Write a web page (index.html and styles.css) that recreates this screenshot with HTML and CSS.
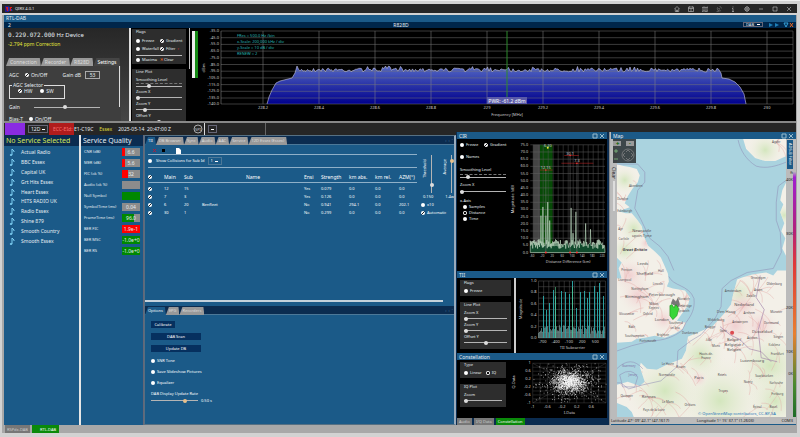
FILE: index.html
```
<!DOCTYPE html>
<html lang="en">

<head>
    <meta charset="UTF-8">
    <meta name="viewport" content="width=device-width, initial-scale=1.0">
    <title>QIRX 4.0.1</title>
    <link rel="stylesheet" href="styles.css">
</head>

<body>
    <header class="titlebar">
        <svg class="logo" viewBox="0 0 8 6">
            <rect width="4" height="6" fill="#1c1c8c" />
            <path d="M1 1h2v4h-1zM5 1h2v1h-1v3h-1z" fill="#e01818" />
            <path d="M4 1v4M6 3l1 2" stroke="#3b3bd8" />
        </svg>
        <h1>QIRX 4.0.1</h1>
        <nav class="tools">
            <button aria-label="Home"><svg viewBox="0 0 12 12"><path d="M1 6l5-5 5 5M2.500 5v6h7V5M5 11V8h2v3" /></svg></button>
            <button aria-label="Schedule"><svg viewBox="0 0 12 12"><path d="M1 2h10v9H1zM1 5h10M6 5v6M3 1v2M9 1v2" /></svg></button>
            <button aria-label="Map"><svg viewBox="0 0 12 12"><path d="M0 3l4-1 4 1 4-1v8l-4 1-4-1-4 1zM4 2v8M8 3v8" /></svg></button>
            <button aria-label="Antenna" class="dim"><svg viewBox="0 0 12 12"><path d="M3 3a5 5 0 0 0 6 7zM6 6l2-2M7 1a4 4 0 0 1 4 4M1 11h4l-1-3" /></svg></button>
            <button aria-label="Info"><svg viewBox="0 0 12 12"><path d="M6 1v2M4 5h2v6M4 11h4" /></svg></button>
            <button aria-label="Setup"><svg viewBox="0 0 12 12"><circle cx="6" cy="6" r="4" /><circle cx="6" cy="6" r="2" /><path d="M6 0v2M6 10v2M0 6h2M10 6h2M2 2l1 1M9 9l1 1M10 2L9 3M3 9l-1 1" /></svg></button>
            <button aria-label="Minimize"><svg viewBox="0 0 12 12"><path d="M2 6h8" /></svg></button>
            <button aria-label="Maximize"><svg viewBox="0 0 12 12"><path d="M2 2h8v8H2z" /></svg></button>
            <button aria-label="Close"><svg viewBox="0 0 12 12"><path d="M2 2l8 8M10 2l-8 8" /></svg></button>
        </nav>
    </header>

    <div class="window">
        <div class="head">RTL-DAB</div>
        <div class="subhead">
            <span>2</span>
            <span class="tuner">R828D</span>
            <span class="subtools">
                <select class="drop" aria-label="Mode"><option>DAB</option></select>
                <svg viewBox="0 0 26 6">
                    <path d="M1 1l4 2-4 2zM7 1l4 2-4 2z" fill="#1d7fb8" />
                    <path d="M16 1h4l-2 4z" fill="none" stroke="#35a0d8" />
                    <path d="M22 1l3 4M25 1l-3 4" stroke="#f06a20" />
                </svg>
            </span>
        </div>

        <!-- receiver -->
        <section class="receiver">
            <div class="device">
                <p class="freq"><span>0.229.072.000</span> Hz Device</p>
                <p class="ppm">-2.794 ppm Correction</p>
                <div class="tabs big">
                    <button>Connection</button><button>Recorder</button><button>R828D</button><button class="on">Settings</button>
                </div>
                <div class="settings">
                    <div class="row">
                        <span>AGC</span>
                        <label><input type="checkbox" checked> On/Off</label>
                        <label class="gaindb">Gain dB <input type="text" value="53"></label>
                    </div>
                    <fieldset class="agc">
                        <legend>AGC Selector</legend>
                        <label><input type="radio" name="agc" class="tick" checked> HW</label>
                        <label><input type="radio" name="agc"> SW</label>
                    </fieldset>
                    <label class="row gain">Gain <input type="range" value="47"></label>
                    <div class="row"><span>Bias-T</span><label><input type="checkbox"> On/Off</label></div>
                    <i class="scroll"></i>
                </div>
            </div>
            <div class="flags">
                <fieldset class="box">
                    <legend>Flags</legend>
                    <div class="pairs">
                        <label><input type="checkbox"> Freeze</label>
                        <label><input type="checkbox" checked> Gradient</label>
                        <label><input type="checkbox"> Waterfall</label>
                        <label><input type="checkbox" checked> Filter <b>▫</b></label>
                    </div>
                    <div class="pairs ruled">
                        <label><input type="checkbox"> Maxima</label>
                        <button class="clear"><b>✕</b> Clear</button>
                    </div>
                </fieldset>
                <fieldset class="box lineplot">
                    <legend>Line Plot</legend>
                    <label>Smoothing Level <input type="range" class="ticks" value="27"></label>
                    <label>Zoom X <input type="range" value="0"></label>
                    <label>Zoom Y <input type="range" value="16"></label>
                    <label>Offset Y <input type="range" value="50"></label>
                </fieldset>
            </div>
            <i class="rail"></i>
            <div class="level"></div>
            <svg class="spectrum" id="spectrum" viewBox="0 0 596 92"></svg>
        </section>

        <div class="status">
            <i class="purple"></i>
            <select class="drop" aria-label="Channel"><option>12D</option></select>
            <span class="ecc">ECC-EId:</span>
            <span class="eid">E1-C19C</span>
            <span class="ens">Essex</span>
            <span class="time">2025-05-14&nbsp; 20:47:00 Z</span>
            <svg class="spi" viewBox="0 0 10 10"><circle cx="5" cy="5" r="4" /><text x="5" y="7">SPI</text></svg>
            <i class="split"></i>
            <select class="drop mini" aria-label="Audio device"><option></option></select>
            <i class="mark"></i>
        </div>

        <main class="main">
            <section class="services">
                <h2>No Service Selected</h2>
                <ul id="services"></ul>
            </section>

            <section class="quality">
                <h2>Service Quality</h2>
                <dl>
                    <div><dt>CNR (dB)</dt><dd class="c1">6.6</dd></div>
                    <div><dt>MER (dB)</dt><dd class="c1">5.6</dd></div>
                    <div><dt>FIC (ok %)</dt><dd class="c2">32</dd></div>
                    <div><dt>Audio (ok %)</dt><dd></dd></div>
                    <div><dt>Null Symbol</dt><dd class="green"></dd></div>
                    <div><dt>SymbolTime (ms)</dt><dd>0.04</dd></div>
                    <div><dt>FrameTime (ms)</dt><dd class="c3">96.0</dd></div>
                    <div><dt>BER FIC</dt><dd class="red">1.9e-1</dd></div>
                    <div><dt>BER MSC</dt><dd class="green">-1.0e+0</dd></div>
                    <div><dt>BER RS</dt><dd class="green">-1.0e+0</dd></div>
                </dl>
            </section>

            <section class="center">
                <div class="strip">
                    <div class="tabs"><button class="on">TII</button><button>DB Browser</button><button>Sync</button><button>Audio</button><button>AAC</button><button>Service</button><button>12D Essex (Essex)</button></div>
                    <span class="arrows">‹ &nbsp;› &nbsp;˅</span>
                </div>
                <div class="tii">
                    <div class="tiimain">
                        <div class="bar">
                            <svg viewBox="0 0 34 7">
                                <path d="M3 2l3 3M6 2l-3 3" stroke="#b81c38" />
                                <rect x="12" y="2" width="3" height="3" fill="#000" />
                                <path d="M26 1h3l2 2v4h-5z" fill="#fff" />
                            </svg>
                        </div>
                        <div class="bar collide">
                            <label><input type="checkbox"> Show Collisions for Sub Id</label>
                            <select class="drop" aria-label="Sub Id"><option>1</option></select>
                        </div>
                        <table>
                            <thead>
                                <tr><th><input type="checkbox" aria-label="All" checked></th><th>Main</th><th>Sub</th><th>Name</th><th>Ensi</th><th>Strength</th><th>km abs.</th><th>km rel.</th><th>AZM(°)</th></tr>
                            </thead>
                            <tbody>
                                <tr><td><input type="checkbox" aria-label="12-15" checked></td><td>12</td><td>15</td><td></td><td>Yes</td><td>0.079</td><td>0.0</td><td>0.0</td><td>0.0</td></tr>
                                <tr><td><input type="checkbox" aria-label="7-3" checked></td><td>7</td><td>3</td><td></td><td>Yes</td><td>0.126</td><td>0.0</td><td>0.0</td><td>0.0</td></tr>
                                <tr><td><input type="checkbox" aria-label="6-20" checked></td><td>6</td><td>20</td><td>Benfleet</td><td>No</td><td>0.941</td><td>294.1</td><td>0.0</td><td>202.1</td></tr>
                                <tr><td><input type="checkbox" aria-label="30-1" checked></td><td>30</td><td>1</td><td></td><td>No</td><td>0.299</td><td>0.0</td><td>0.0</td><td>0.0</td></tr>
                            </tbody>
                        </table>
                    </div>
                    <div class="tiiside">
                        <div class="verts">
                            <label><span>Threshold</span><input type="range" value="18"></label>
                            <label><span>Average</span><input type="range" class="hot" value="88"></label>
                        </div>
                        <p><span>0.150</span><span>1.4w</span></p>
                        <label><input type="checkbox"> x10</label>
                        <label><input type="checkbox" checked> Automatic</label>
                    </div>
                </div>
                <i class="hscroll"></i>
                <div class="strip">
                    <div class="tabs"><button class="on">Options</button><button>EPG</button><button>Recorders</button></div>
                    <span class="arrows">‹ &nbsp;› &nbsp;˅</span>
                </div>
                <div class="options">
                    <button class="small">Calibrate</button>
                    <button>DAB Scan</button>
                    <button>Update DB</button>
                    <label><input type="checkbox"> SNR Tone</label>
                    <label><input type="checkbox"> Save Slideshow Pictures</label>
                    <label><input type="checkbox"> Equalizer</label>
                    <div class="rate">
                        <label for="rate">DAB Display Update Rate</label>
                        <span><input type="range" id="rate" class="hot" value="75"> 0.50 s</span>
                    </div>
                </div>
            </section>

            <section class="plots">
                <h3>CIR <svg viewBox="0 0 12 6"><path d="M1 1h4v4H1zM8 1l4 4M12 1L8 5" /></svg></h3>
                <div class="plot cir">
                    <div class="ctl">
                        <div class="pairs">
                            <label><input type="checkbox"> Freeze</label>
                            <label><input type="checkbox" checked> Gradient</label>
                        </div>
                        <label><input type="checkbox"> Names</label>
                        <label class="stack smooth">Smoothing Level <input type="range" class="ticks" value="14"></label>
                        <label class="stack">Zoom X <input type="range" value="0"></label>
                        <div class="axis">
                            <span>x-Axis</span>
                            <label><input type="radio" name="axis"> Samples</label>
                            <label><input type="radio" name="axis" checked> Distance</label>
                            <label><input type="radio" name="axis"> Time</label>
                        </div>
                    </div>
                    <svg id="cir" viewBox="0 0 104 130"></svg>
                </div>
                <h3>TII <svg viewBox="0 0 12 6"><path d="M1 1h4v4H1zM8 1l4 4M12 1L8 5" /></svg></h3>
                <div class="plot tiiplot">
                    <div class="ctl wide">
                        <fieldset class="box one"><legend>Flags</legend><label><input type="checkbox"> Freeze</label></fieldset>
                        <fieldset class="box lineplot">
                            <legend>Line Plot</legend>
                            <label>Zoom X <input type="range" value="0"></label>
                            <label>Zoom Y <input type="range" value="0"></label>
                            <label>Offset Y <input type="range" value="50"></label>
                        </fieldset>
                    </div>
                    <i class="rail"></i>
                    <svg id="tii" viewBox="0 0 90 75"></svg>
                </div>
                <h3>Constellation <svg viewBox="0 0 12 6"><path d="M1 1h4v4H1zM8 1l4 4M12 1L8 5" /></svg></h3>
                <div class="plot constel">
                    <div class="ctl">
                        <fieldset class="box one">
                            <legend>Type</legend>
                            <label><input type="radio" name="type"> Linear</label>
                            <label><input type="radio" name="type" checked> IQ</label>
                        </fieldset>
                        <fieldset class="box lineplot"><legend>IQ Plot</legend><label>Zoom <input type="range" value="0"></label></fieldset>
                    </div>
                    <svg id="iq" viewBox="0 0 102 58"></svg>
                </div>
                <div class="flat"><button>Audio</button><button>I/Q Data</button><button class="on">Constellation</button></div>
            </section>

            <section class="mapwrap">
                <h3>Map <svg viewBox="0 0 12 6"><path d="M1 1h4v4H1zM8 1l4 4M12 1L8 5" /></svg></h3>
                <div class="maprow">
                    <div class="mapleft"><span>Clear</span><i></i></div>
                    <div class="map">
                        <svg id="map" viewBox="617 139 169 277" preserveAspectRatio="xMidYMid slice">
                            <defs>
                                <radialGradient id="green"><stop offset="0" stop-color="#d3e6bd" /><stop offset="1" stop-color="#f1efe4" stop-opacity="0" /></radialGradient>
                                <radialGradient id="pink"><stop offset="0" stop-color="#f1cfd0" /><stop offset="1" stop-color="#f3eee6" stop-opacity="0" /></radialGradient>
                                <clipPath id="land">
                                    <path d="M617 164L624 166 630 167 637 169 640 175 638 182 633 188 628 196 625 203 630 207 619 211 626 213 632 213 637 219 642 226 644 236 648 245 655 251 661 257 665 266 668 273 669 281 667 286 673 288 685 290 690 297 688 305 682 313 677 320 686 322 683 328 675 333 665 337 655 335 645 337 637 338 632 341 617 342V278L622 278 619 268 622 262 617 257z" />
                                    <path d="M743 139L746 149 755 158 765 161 775 161 786 156V139z" />
                                    <path d="M786 182L782 190 780 200 783 204 780 212 784 223 781 231 785 238 782 248 786 256z" />
                                    <path d="M786 270L777 270 773 275 766 272 752 274 742 277 737 279 733 294 731 304 724 313 713 325 702 330 688 336 686 350 682 358 667 364 657 369 647 368 641 362 640 366 645 381 640 385 628 381 617 384V402L627 406 632 411 634 416H786z" />
                                </clipPath>
                            </defs>
                            <rect x="617" y="139" width="169" height="277" fill="#aad3df" />
                            <g clip-path="url(#land)">
                                <rect x="617" y="139" width="169" height="277" fill="#f3f0e8" />
                                <g fill="url(#green)">
                                    <circle cx="765" cy="150" r="18" /><circle cx="625" cy="180" r="14" /><circle cx="634" cy="228" r="16" />
                                    <circle cx="625" cy="250" r="14" /><circle cx="770" cy="365" r="40" /><circle cx="720" cy="400" r="45" />
                                    <circle cx="665" cy="390" r="40" /><circle cx="700" cy="355" r="26" /><circle cx="775" cy="400" r="30" />
                                    <circle cx="784" cy="215" r="12" /><circle cx="740" cy="295" r="20" />
                                </g>
                                <g fill="url(#pink)">
                                    <circle cx="630" cy="275" r="20" /><circle cx="638" cy="295" r="20" /><circle cx="664" cy="319" r="14" />
                                    <circle cx="735" cy="325" r="24" /><circle cx="743" cy="305" r="18" /><circle cx="760" cy="325" r="20" />
                                    <circle cx="699" cy="378" r="9" /><circle cx="646" cy="243" r="8" />
                                </g>
                                <g id="roads" fill="none" stroke="#e3a7a3" stroke-width=".4"></g>
                                <path d="M720 326l10 8 10 5 9 9 12 3 10 10M760 275l-4 22 8 12-6 20 3 28 16 4" fill="none" stroke="#9c7ba5" stroke-width=".6" />
                            </g>
                            <g fill="none" stroke="#8d88b3" stroke-width=".5">
                                <path d="M617 164H638L645 172 645 182 638 190 635 208 641 219 650 238 660 246 668 256 674 270M669 276c4 10 20 8 25 22 1 10-2 16-8 24l-4 8c-8 6-18 10-30 10l-20 5-17 6" />
                                <path d="M738 140c2 10 8 20 18 26 10 3 20 0 30-4M786 180l-8 6-2 16v18l4 12 1 20-8 16-26 4-16 8-9 8-1 18-6 12-14 16-10 6-13 10-1 16-16 14-18 4-14 4-8-6h-22" />
                                <path d="M617 368q14-14 26 0M620 374q12-8 18 2l-3 10h-12z" />
                            </g>
                            <g id="cities" fill="#514d50"></g>
                            <path d="M671 303l2-5 3 3 2-4 2 7-2 3z" fill="#777" />
                            <path d="M670 305l2-1 2 3 2-3 3 4-2 7-4 4-3-4z" fill="#38d638" stroke="#147a14" stroke-width=".5" />
                            <circle cx="732" cy="332" r="2" fill="#dc4a50" />
                            <a href="#copyright"><text x="698" y="414" class="copy">© OpenStreetMap contributors, CC-BY-SA</text></a>
                        </svg>
                        <div class="mapctl">
                            <button aria-label="Centre">✚</button><button aria-label="Picture">▪</button>
                            <svg viewBox="0 0 23 14">
                                <path d="M3 1v4M1 3h4M1 11h4" stroke="#8c8" />
                                <circle cx="15" cy="7" r="6" />
                                <path d="M13 4l2-2 2 2M13 10l2 2 2-2M12 5l-2 2 2 2M18 5l2 2-2 2" />
                            </svg>
                        </div>
                    </div>
                    <div class="mapright">
                        <span class="adsb">ADS-B Filter</span>
                        <ol><li>ft</li><li>40K</li><li>30K</li><li>20K</li><li>10K</li><li>0K</li></ol>
                    </div>
                </div>
                <div class="coords"><span>Latitude 47° 09' 42.1" (47.1617)</span><span>Longitude 1° 15' 37.1" (1.2603)</span><span>COM3</span></div>
            </section>
        </main>
    </div>

    <footer class="flat">
        <button>RSPdx-DAB</button><button class="on">RTL-DAB</button>
    </footer>

    <script src="script.js"></script>
</body>

</html>
```
FILE: styles.css
```
* {
    box-sizing: border-box;
    margin: 0;
    padding: 0;
}

body {
    display: flex;
    flex-direction: column;
    height: 100vh;
    padding: 3px 3px 4px 2px;
    background-color: #d2d2d2;
    border-top: 1px solid #f0f0f0;
    color: #e6edf2;
    font: 5px/8px "Noto Sans", "Open Sans", sans-serif;
    overflow: hidden;
}

button, input, select {
    font: inherit;
    color: inherit;
    border: 0;
    background: none;
}

h1, h2, h3 {
    font-weight: normal;
}

fieldset {
    border: 0;
    min-width: 0;
}

label {
    display: flex;
    align-items: center;
    gap: 2px;
    white-space: nowrap;
}

ul, ol {
    list-style: none;
}

/* form controls */

input[type="checkbox"], input[type="radio"] {
    appearance: none;
    flex: none;
    width: 4px;
    height: 4px;
    border-radius: 50%;
    background: #fff;
}

input[type="checkbox"]:checked, input.tick:checked {
    background: linear-gradient(135deg, #fff 40%, #222 40%, #222 60%, #fff 60%);
}

input[type="radio"]:checked:not(.tick) {
    background: radial-gradient(#111 30%, #fff 40%);
}

input[type="range"] {
    appearance: none;
    display: block;
    width: 100%;
    height: 5px;
    min-width: 0;
    background: linear-gradient(#b4b4b4, #b4b4b4) center / 100% 1px no-repeat;
}

input[type="range"].ticks {
    border-top: 1px dashed #777;
}

input[type="range"]::-webkit-slider-thumb {
    appearance: none;
    width: 4px;
    height: 4px;
    border-radius: 50%;
    background: #ddd;
}

input[type="range"].hot::-webkit-slider-thumb {
    background: #e8c08c;
}

.drop {
    appearance: none;
    width: 20px;
    height: 8px;
    padding-left: 2px;
    border: 1px solid #667;
    line-height: 6px;
    background: linear-gradient(#fff, #fff) right 2px center / 3px 1px no-repeat;
}

/* title bar */

.titlebar {
    display: flex;
    align-items: center;
    flex: none;
    height: 9px;
    padding: 0 5px 0 3px;
    background: #262626;
}

.logo {
    width: 8px;
    height: 6px;
    margin-right: 2px;
}

.titlebar h1 {
    font-size: 4px;
}

.tools {
    display: flex;
    gap: 8px;
    margin-left: auto;
}

.tools button {
    width: 6px;
    height: 6px;
}

.tools svg {
    display: block;
    fill: none;
    stroke: #ddd;
}

.tools .dim {
    opacity: .5;
}

.window {
    display: flex;
    flex-direction: column;
    flex: 1;
    min-height: 0;
    margin-top: 2px;
    padding: 0 1px 0 2px;
    background: #a8a8a8;
}

.head {
    height: 7px;
    padding-left: 2px;
    line-height: 7px;
    background: #1b5a88;
}

.subhead {
    display: grid;
    grid-template-columns: 1fr auto 1fr;
    align-items: center;
    height: 6px;
    padding: 0 2px 0 4px;
    line-height: 6px;
    background: #00264a;
}

.tuner {
    font-size: 5px;
}

.subtools {
    display: flex;
    justify-content: flex-end;
    gap: 5px;
}

.subtools svg {
    width: 26px;
    height: 6px;
}

.subtools .drop {
    height: 5px;
    line-height: 3px;
    font-size: 4px;
}

/* receiver */

.receiver {
    display: flex;
    height: 93px;
    background: #000;
    overflow: hidden;
}

.device {
    width: 127px;
    padding: 3px 8px 0 2px;
    border-right: 2px solid #ddd;
    background: linear-gradient(#272727, #454545);
}

.freq {
    padding-left: 2px;
    font-size: 6px;
    line-height: 8px;
}

.freq span {
    font-family: "DejaVu Sans Mono", monospace;
}

.ppm {
    padding: 1px 2px 0;
    line-height: 9px;
    color: #e4e43c;
}

.tabs {
    display: flex;
    height: 8px;
}

.tabs button {
    padding: 0 3px;
    line-height: 8px;
    white-space: nowrap;
    color: #ddd;
    background: #999;
    clip-path: polygon(3px 0, calc(100% - 1px) 0, 100% 100%, 0 100%);
}

.tabs button.on {
    color: #fff;
    background: #1b5a88;
}

.big {
    margin-top: 9px;
    font-size: 5px;
}

.big button {
    padding: 0 4px;
}

.big button.on {
    background: #454545;
}

.settings {
    position: relative;
    display: flex;
    flex-direction: column;
    gap: 4px;
    padding: 5px 21px 0 3px;
    background: #3e3e3e;
}

.settings .row {
    display: flex;
    gap: 6px;
}

.gaindb {
    margin-left: auto;
    gap: 4px;
}

.gaindb input {
    width: 15px;
    height: 8px;
    border: 1px solid #aaa;
    text-align: center;
}

.agc {
    display: flex;
    gap: 8px;
    width: 56px;
    height: 16px;
    padding: 0 8px;
    border: 1px solid #ddd;
}

.agc legend {
    margin-left: -6px;
    padding: 0 1px;
    line-height: 4px;
}

.settings .gain {
    gap: 14px;
}

.scroll {
    position: absolute;
    top: 0;
    right: 1px;
    width: 1px;
    height: 41px;
    background: #ddd;
}

.flags {
    display: flex;
    flex-direction: column;
    gap: 5px;
    width: 55px;
    padding: 1px 0 0 1px;
    font-size: 4px;
}

.box {
    padding: 0 4px;
    background: #2d2d2d;
}

.box legend {
    float: left;
    width: 100%;
    line-height: 5px;
}

.flags .box:first-child {
    height: 36px;
}

.pairs {
    clear: both;
    display: grid;
    grid-template-columns: 24px 1fr;
    padding-top: 3px;
    width: 100%;
}

.ruled {
    padding-top: 0;
    margin-top: 2px;
    border-top: 1px solid #bbb;
}

.pairs b {
    color: #e33;
}

.clear {
    text-align: left;
}

.pairs .clear b {
    color: #f06a20;
}

.lineplot {
    padding: 0 4px;
}

.lineplot label {
    flex-direction: column;
    align-items: stretch;
    gap: 0;
    clear: both;
    line-height: 7px;
}

.flags .lineplot {
    flex: none;
    height: 60px;
}

.lineplot label:first-of-type {
    padding-top: 2px;
}

.rail {
    flex: none;
    width: 1px;
    height: 41px;
    margin-left: 3px;
    background: #bbb;
}

.level {
    width: 6px;
    height: 47px;
    margin: 3px 0 0 2px;
    border-left: 3px solid #eee;
    background: #158a15;
}

.spectrum {
    flex: 1;
    min-width: 0;
    height: 92px;
}

svg text {
    fill: #ccc;
    font-size: 4px;
}

.status {
    display: flex;
    align-items: center;
    flex: none;
    height: 14px;
    padding-left: 1px;
    border-top: 2px solid #888;
    background: #262626;
}

.purple {
    width: 20px;
    height: 12px;
    margin-right: 3px;
    background: #8a2be2;
}

.ecc {
    width: 25px;
    margin-left: 1px;
    padding-left: 4px;
    line-height: 12px;
    color: #f87070;
    background: #b01c1c;
}

.ens {
    margin-left: 6px;
    color: #dede3c;
}

.time {
    margin-left: 6px;
}

.spi {
    width: 10px;
    height: 10px;
    margin-left: 22px;
    fill: none;
    stroke: #aaa;
}

.spi text {
    stroke: none;
    text-anchor: middle;
}

.split {
    align-self: stretch;
    width: 1px;
    margin-left: 1px;
    background: #ddd;
}

.mini {
    width: 9px;
    margin-left: 3px;
    background-position: center;
}

.mark {
    align-self: stretch;
    width: 1px;
    margin-left: 48px;
    background: #666;
}

/* main area */

.main {
    display: grid;
    grid-template-columns: 77px 63px minmax(0, 1fr) 154px 186px;
    flex: 1;
    min-height: 0;
    background: #0b2c48;
}

.services {
    border-right: 2px solid #e6e6e6;
    background: #1b5a88;
}

.services h2, .quality h2 {
    height: 11px;
    padding-left: 2px;
    font-size: 7px;
    line-height: 11px;
    white-space: nowrap;
    background: #0b2c50;
}

.services h2 {
    color: #d6e85a;
}

.services ul, .quality dl {
    display: flex;
    flex-direction: column;
    justify-content: space-between;
    height: 97px;
    margin-top: 2px;
}

.services li {
    display: flex;
    align-items: center;
    gap: 6px;
    padding-left: 5px;
}

.services svg {
    width: 6px;
    height: 8px;
    fill: none;
    stroke: #7fd0f4;
}

.quality dl {
    height: 107px;
    padding: 0 3px;
}

.quality {
    border-right: 1px solid #667;
    background: #1b5a88;
}

.quality dl div {
    display: flex;
    align-items: center;
    justify-content: space-between;
    white-space: nowrap;
}

.quality dt {
    font-size: 4px;
}

.quality dd {
    width: 18px;
    height: 8px;
    text-align: center;
    background: #8c8c8c;
}

.quality dd.c1 {
    background: linear-gradient(90deg, #f00 3px, #8c8c8c 3px);
}

.quality dd.c2 {
    background: linear-gradient(90deg, #f00 6px, #8c8c8c 6px);
}

.quality dd.c3 {
    background: linear-gradient(90deg, #080 12px, #8c8c8c 12px);
}

.quality dd.green {
    background: #080;
}

.quality dd.red {
    background: #f00;
}

.center {
    display: flex;
    flex-direction: column;
    min-width: 0;
    border: 1px solid #567083;
    border-right: 2px solid #9ab;
    background: #1b5a88;
    color: #fff;
    font-size: 4px;
}

.strip {
    display: flex;
    justify-content: space-between;
    flex: none;
    height: 9px;
    padding-top: 1px;
    border-bottom: 1px solid #4c7898;
    background: #0b2c50;
}

.arrows {
    padding-right: 1px;
    color: #5d8fb9;
}

.tii {
    display: flex;
    flex: 157;
    gap: 4px;
    padding: 1px 0 0 3px;
}

.tiimain {
    flex: 1;
}

.bar {
    display: flex;
    align-items: center;
    height: 9px;
    border-bottom: 1px solid #8fb0c8;
}

.bar svg {
    width: 34px;
    height: 7px;
    margin-left: 2px;
}

.collide {
    gap: 3px;
    height: 13px;
}

.collide label {
    gap: 4px;
}

.collide .drop {
    width: 14px;
    border-color: #4c7898;
    background-position: right 3px center;
}

table {
    width: 100%;
    border-collapse: collapse;
    table-layout: fixed;
}

th, td {
    height: 8px;
    font-weight: normal;
    text-align: left;
    line-height: 6px;
}

th {
    height: 14px;
    padding-top: 5px;
    border-bottom: 1px solid #8fb0c8;
    font-size: 5px;
}

tbody::before {
    content: "";
    display: block;
    height: 2px;
}

th input, td input {
    display: block;
}

th:nth-child(1) { width: 16px; }
th:nth-child(2) { width: 20px; }
th:nth-child(3) { width: 18px; }
th:nth-child(4) { text-align: center; }
th:nth-child(5) { width: 17px; }
th:nth-child(6) { width: 28px; }
th:nth-child(7) { width: 26px; }
th:nth-child(8) { width: 24px; }
th:nth-child(9) { width: 18px; }

.tiiside {
    width: 33px;
    padding-top: 9px;
}

.verts {
    display: flex;
    justify-content: space-between;
    height: 38px;
}

.verts label {
    align-items: flex-start;
    gap: 0;
}

.verts span {
    margin-top: 4px;
    writing-mode: vertical-rl;
    transform: rotate(180deg);
}

.verts input[type="range"] {
    writing-mode: vertical-lr;
    direction: rtl;
    width: 5px;
    height: 38px;
    background-size: 1px 100%;
}

.tiiside p {
    display: flex;
    justify-content: space-between;
    padding-left: 2px;
}

.tiiside > label {
    height: 8px;
}

.hscroll {
    flex: none;
    width: 298px;
    max-width: 100%;
    height: 2px;
    margin-bottom: 4px;
    background: #c4d2dc;
}

.options {
    display: flex;
    flex-direction: column;
    align-items: flex-start;
    flex: 105;
    gap: 3px;
    padding: 6px 6px 0;
}

.options button {
    width: 50px;
    height: 7px;
    margin-bottom: 2px;
    line-height: 7px;
    background: #06305f;
}

.options button.small {
    width: 24px;
}

.rate span {
    display: flex;
    gap: 3px;
    align-items: center;
    white-space: nowrap;
    line-height: 5px;
}

.rate input[type="range"] {
    width: 47px;
}

/* plots */

.plots {
    display: flex;
    flex-direction: column;
    padding-left: 1px;
    padding-right: 2px;
    border-right: 1px solid #8a8a8a;
    background: #0b2c50;
    font-size: 4px;
}

/* these two columns start a little higher than the rest */
.plots, .mapwrap {
    margin-top: -3px;
}

.plots h3, .mapwrap h3 {
    display: flex;
    align-items: center;
    justify-content: space-between;
    flex: none;
    height: 7px;
    padding: 0 3px 0 2px;
    font-size: 5px;
    background: #1b5a88;
}

.plots h3 svg, .mapwrap h3 svg {
    width: 12px;
    height: 6px;
    fill: none;
    stroke: #9bc;
}

.plot {
    display: flex;
    background: #000;
    min-height: 0;
}

.plot > svg {
    flex: 1;
    min-width: 0;
}

.cir {
    flex: 132;
}

.tiiplot {
    flex: 75;
}

.constel {
    flex: 58;
}

.ctl {
    width: 49px;
    padding: 2px 0 0 3px;
}

.ctl.wide {
    width: 54px;
}

.cir .ctl {
    padding-top: 0;
}

.cir .pairs {
    padding-top: 2px;
    padding-bottom: 4px;
}

.stack {
    flex-direction: column;
    align-items: stretch;
    gap: 0;
    margin-top: 2px;
}

.stack.smooth {
    margin-top: 5px;
}

.axis {
    margin-top: 4px;
    line-height: 6px;
}

.axis label {
    padding-left: 3px;
}

.box.one {
    display: flex;
    flex-wrap: wrap;
    gap: 0 4px;
    height: 16px;
    margin-bottom: 6px;
}

.ctl .lineplot {
    padding-bottom: 4px;
}

.tiiplot .rail {
    width: 2px;
    height: 100%;
    background: #ccc;
}

.flat {
    display: flex;
    gap: 2px;
    flex: none;
    height: 7px;
    background: #0b2c50;
}

.flat button {
    padding: 0 2px;
    line-height: 7px;
    color: #ccc;
    background: #777;
}

.flat button.on {
    color: #fff;
    background: #0a8a0a;
}

footer.flat {
    height: 8px;
    padding-left: 3px;
    font-size: 4px;
    background: #a8a8a8;
}

footer.flat button.on {
    padding: 0 3px 0 8px;
}

/* map */

.mapwrap {
    display: flex;
    flex-direction: column;
    padding-left: 1px;
    background: #b8b8b8;
    min-height: 0;
}

.maprow {
    display: flex;
    flex: 1;
    min-height: 0;
}

.mapleft {
    width: 6px;
    padding-top: 28px;
    color: #222;
    background: #bbb;
}

.mapleft span {
    display: block;
    writing-mode: vertical-rl;
    line-height: 6px;
}

.mapleft i {
    display: block;
    width: 2px;
    height: 30px;
    margin: 2px;
    background: #ddd;
}

.map {
    position: relative;
    flex: 1;
    min-width: 0;
}

#map {
    display: block;
    width: 100%;
    height: 100%;
}

#map text {
    fill: #514d50;
    font-size: 3px;
}

#map text.copy {
    fill: #2070b8;
    font-size: 4px;
}

#map text.sea {
    fill: #7a6aa0;
}

#map text.large {
    font-size: 4px;
}

#map text.country {
    font-size: 4px;
    font-weight: bold;
    font-style: italic;
}

.mapctl {
    position: absolute;
    top: 0;
    left: -4px;
    display: grid;
    grid-template-columns: 10px 10px;
    gap: 1px 3px;
    width: 23px;
    height: 24px;
    padding-top: 2px;
    background: rgba(50, 55, 58, .9);
}

.mapctl button {
    width: 8px;
    height: 5px;
    line-height: 5px;
    font-size: 4px;
    color: #1c6c1c;
    background: #9a9a9a;
}

.mapctl svg {
    grid-column: span 2;
    width: 23px;
    height: 14px;
    fill: none;
    stroke: #888;
    stroke-width: .7;
}

.mapright {
    position: relative;
    width: 10px;
    border-right: 3px solid;
    border-image: linear-gradient(#bbb 12%, #a020d0 14%, #b02080 32%, #e03838 45%, #e88030 70%, #4a8a30 88%, #1c6a28) 1;
    color: #222;
    background: #bbb;
}

.adsb {
    display: block;
    height: 29px;
    margin: 1px 1px 0;
    writing-mode: vertical-rl;
    line-height: 6px;
    font-size: 4px;
    text-align: center;
    color: #fff;
    background: #1b5a88;
}

/* altitude scale, tick spacing is not linear */
.mapright ol {
    display: grid;
    grid-template-rows: 7px 54px 74px 44px 22px 8px;
    font-size: 4px;
    text-align: right;
}

.coords {
    display: flex;
    justify-content: space-between;
    height: 8px;
    padding: 0 3px 0 0;
    color: #222;
    background: #bbb;
    white-space: nowrap;
    border-bottom: 1px solid #1b5a88;
    font-size: 4px;
}
```
FILE: script.js
```
const NS = 'http://www.w3.org/2000/svg';

// small repeatable generator so the traces look the same on each load
let seed = 7;
function rnd() {
    seed = (seed * 16807) % 2147483647;
    return seed / 2147483647;
}

function add(svg, tag, attrs, text) {
    const el = document.createElementNS(NS, tag);
    for (const k in attrs) el.setAttribute(k, attrs[k]);
    if (text !== undefined) el.textContent = text;
    svg.appendChild(el);
    return el;
}

function line(svg, x1, y1, x2, y2, stroke, w) {
    add(svg, 'line', { x1, y1, x2, y2, stroke, 'stroke-width': w || 0.5 });
}

function label(svg, x, y, text, anchor, fill) {
    return add(svg, 'text', { x, y, 'text-anchor': anchor || 'middle', style: fill ? 'fill:' + fill : '' }, text);
}

function sideLabel(svg, x, y, text) {
    label(svg, 0, 0, text).setAttribute('transform', `translate(${x} ${y}) rotate(-90)`);
}

function drawSpectrum() {
    const svg = document.getElementById('spectrum');
    const grad = add(add(svg, 'defs', {}), 'linearGradient', { id: 'blue', x1: 0, y1: 0, x2: 0, y2: 1 });
    add(grad, 'stop', { offset: 0, 'stop-color': '#5468c4' });
    add(grad, 'stop', { offset: 1, 'stop-color': '#00008c' });

    let top = '68,76 70,69 73,62 77,55 81,53 93,50 96,45';
    for (let x = 98; x < 521; x += 1.5) {
        top += ` ${x},${(40 + rnd() * 4 - (rnd() > 0.85 ? 2 : 0)).toFixed(1)}`;
    }
    top += ' 522,45 523,50 530,51 536,54 541,59 545,66 547,76';
    add(svg, 'polygon', { points: top, fill: 'url(#blue)' });
    for (let i = 0; i < 10; i++) line(svg, 64 + i * 56, 3, 64 + i * 56, 76, '#888');
    for (let i = 0; i < 12; i++) {
        const y = Math.min(3 + i * 6.7, 76);
        line(svg, 22, y, 594, y, '#777');
        label(svg, 20, y + 1, (i === 11 ? -140 : -35 - i * 10).toFixed(1), 'end');
    }
    add(svg, 'polyline', { points: top, fill: 'none', stroke: '#c8c8e4', 'stroke-width': 0.6 });
    line(svg, 22, 3, 22, 76, '#999');
    line(svg, 308, 3, 308, 76, '#2c8a2c', 1);
    line(svg, 594, 3, 594, 76, '#777');
    ['228.2', '228.4', '228.6', '228.8', '229', '229.2', '229.4', '229.6', '229.8', '230'].forEach((t, i) => {
        label(svg, 64 + i * 56, 81, t);
    });
    ['FRes = 500.0 Hz /bin', 'x-Scale: 200,000 kHz / div', 'y-Scale = 10 dB / div', 'RENEW = 2'].forEach((t, i) => {
        label(svg, 38, 9 + i * 6, t, 'start', '#28b4b4');
    });
    add(svg, 'rect', { x: 288, y: 69, width: 40, height: 7, fill: '#5a5aa8' });
    label(svg, 308, 75, 'PWR: -61.2 dBm', 'middle', '#fff').style.fontSize = '5px';
    label(svg, 308, 88, 'Frequency [MHz]');
    sideLabel(svg, 6, 40, 'dBm');
}

function drawCir() {
    const svg = document.getElementById('cir');
    const x0 = 25, x1 = 102, y0 = 3, y1 = 114;
    add(svg, 'rect', { x: 28, y: y0, width: 7, height: 111, fill: '#444' });
    add(svg, 'rect', { x: 35, y: y0, width: 13, height: 111, fill: '#064a06' });
    for (let i = 0; i < 16; i++) {
        const y = y0 + i * 7.4;
        line(svg, x0, y, x1, y, '#666');
        label(svg, x0 - 2, y + 1, (75 - i * 5).toFixed(1), 'end');
    }
    for (let i = 0; i < 15; i++) line(svg, x0 + 3 + i * 5.15, y0, x0 + 3 + i * 5.15, y1, '#555');
    const peaks = { 36: 38, 38: 47, 41: 38, 43: 52, 45: 33, 67: 46, 69: 20, 72: 42, 82: 30, 87: 24 };
    let pts = `${x0},${y1}`;
    for (let x = x0; x < x1; x += 1) {
        pts += ` ${x},${y1 - (peaks[x] || 7 + rnd() * 7)} ${x + 0.5},${y1 - 4 - rnd() * 6}`;
    }
    pts += ` ${x1},${y1}`;
    add(svg, 'polygon', { points: pts, fill: '#104a2c', stroke: '#c8e0c8', 'stroke-width': 0.6 });
    [[35, 48, 29, 41, '12.15'], [60, 75, 14, 66, '30.1'], [57, 90, 22, 73, '7.3']].forEach(([a, b, y, c, t]) => {
        line(svg, a, y, b, y, '#d82828');
        line(svg, c, y, c, y1, '#777');
        add(svg, 'circle', { cx: c, cy: y, r: 0.8, fill: '#f33' });
        add(svg, 'circle', { cx: c, cy: y1, r: 1, fill: '#f33' });
        label(svg, c, y - 1, t);
    });
    add(svg, 'circle', { cx: 43, cy: 6, r: 1, fill: '#ee3' });
    label(svg, 43, 5, '6.20');
    ['-60', '-20', '20', '60', '100', '140', '180', '220'].forEach((t, i) => {
        label(svg, 27 + i * 10.3, 119, t).style.fontSize = '3px';
    });
    label(svg, 64, 125, 'Distance Difference (km)');
    sideLabel(svg, 8, 59, 'Magnitude (dB)');
}

function drawTii() {
    const svg = document.getElementById('tii');
    const x0 = 22, x1 = 89, y0 = 3, y1 = 60;
    for (let i = 0; i <= 10; i++) line(svg, x0, y0 + i * 5.7, x1, y0 + i * 5.7, '#555');
    for (let i = 0; i <= 13; i++) line(svg, x0 + i * 5.15, y0, x0 + i * 5.15, y1, '#555');
    for (let x = x0; x < x1; x += 1) line(svg, x, y1, x, y1 - 4 - rnd() * 9, '#7a9a9a', 0.7);
    [[27, 42], [30, 28], [33, 35], [37, 48], [39, 42], [45, 47], [49, 46], [53, 44], [56, 57], [60, 30], [64, 46],
        [68, 47], [71, 40], [73, 46], [78, 52], [81, 46], [83, 55], [87, 42]].forEach(([x, h]) => {
        line(svg, x, y1, x, y1 - h, '#2ba0a0', 1);
    });
    [39, 56].forEach(x => line(svg, x, y1, x, y0 + 6, '#5ad090', 0.6));
    ['1.0', '0.8', '0.6', '0.4', '0.2', '0.0'].forEach((t, i) => label(svg, x0 - 2, y0 + 1 + i * 11.4, t, 'end'));
    ['-700', '-400', '-100', '200', '500'].forEach((t, i) => label(svg, 26 + i * 13.2, 65, t));
    label(svg, 56, 71, 'TII Subcarrier');
    sideLabel(svg, 5, 31, 'Magnitude');
}

function drawIq() {
    const svg = document.getElementById('iq');
    const x0 = 27, x1 = 101, y0 = 3, y1 = 43;
    for (let i = 0; i <= 10; i++) {
        line(svg, x0, y0 + i * 4, x1, y0 + i * 4, '#555', 0.4);
        line(svg, x0 + i * 7.4, y0, x0 + i * 7.4, y1, '#555', 0.4);
    }
    line(svg, x0, y0, x1, y1, '#555', 0.4);
    line(svg, x0, y1, x1, y0, '#555', 0.4);
    let d = '';
    for (let i = 0; i < 1500; i++) {
        const r = Math.sqrt(-2 * Math.log(rnd() + 0.0001)) * (i % 3 ? 1 : 1.9);
        const a = rnd() * Math.PI * 2;
        const x = 64 + r * Math.cos(a) * 8, y = 22 + r * Math.sin(a) * 5;
        if (x > x0 && x < x1 && y > y0 && y < y1) d += `M${x.toFixed(1)} ${y.toFixed(1)}h.7`;
    }
    add(svg, 'path', { d, stroke: '#fff', 'stroke-width': 0.7 });
    ['1', '0.6', '0.2', '-0.2', '-0.6', '-1'].forEach((t, i) => label(svg, x0 - 2, y0 + 1 + i * 8, t, 'end'));
    ['-1', '-0.6', '-0.2', '0.2', '0.6'].forEach((t, i) => label(svg, x0 + i * 14.8, 48, t));
    label(svg, 64, 54, 'I-Data');
    sideLabel(svg, 9, 22, 'Q-Data');
}

function drawMap() {
    const cities = [
        [776, 143, 'Agder'], [636, 187, 'Aberdeen'], [623, 200, 'Dundee'], [625, 212, 'Edinburgh'], [621, 230, 'Ayr'],
        [642, 232, 'Newcastle', 'large'], [642, 237, 'upon Tyne', 'large'], [624, 240, 'Carlisle'],
        [635, 251, 'Great Britain', 'country'], [643, 265, 'Leeds', 'large'], [627, 271, 'Preston'], [661, 272, 'Hull'],
        [645, 275, 'Sheffield', 'large'], [625, 281, 'Liverpool'], [658, 284, 'Lincoln'], [640, 289, 'Nottingham'],
        [662, 295, 'Peterborough', 'large'], [637, 297, 'Birmingham', 'large'], [684, 299, 'Norwich'],
        [654, 304, 'Milton'], [654, 308, 'Keynes'], [684, 306, 'Cambridge'], [627, 314, 'Gloucester'],
        [648, 314, 'Oxford'], [684, 311, 'Ipswich'], [662, 320, 'London', 'large'], [676, 323, 'Southend'],
        [675, 328, 'on Sea'], [632, 327, 'Bath'], [635, 336, 'Southampton'], [663, 335, 'Brighton'],
        [648, 341, 'Portsmouth'], [690, 333, 'Dunkerque'], [758, 279, 'Groningen'], [774, 284, 'Oldenburg'],
        [733, 291, 'Amsterdam'], [758, 290, 'Assen'], [751, 296, 'Zwolle'], [744, 305, 'Nederland', 'large'],
        [726, 312, 'Den Haag', 'large'], [749, 313, 'Arnhem'], [776, 312, 'Münster'], [716, 320, 'Middelburg'],
        [740, 322, 'Antwerpen'], [771, 323, 'Dortmund'], [710, 327, 'Brugge'], [762, 332, 'Düsseldorf', 'large'],
        [778, 337, 'Siegen'], [723, 331, 'Gent'], [752, 338, 'Aachen'], [709, 340, 'Lille'],
        [734, 340, 'België /', 'large'], [734, 345, 'Belgique /', 'large'], [734, 350, 'Belgien', 'large'],
        [716, 346, 'Mons'], [706, 354, 'Hauts-de-'], [706, 358, 'France'], [752, 361, 'Luxembourg', 'large'],
        [774, 345, 'Koblenz'], [777, 354, 'Frankfurt'], [764, 376, 'Saarbrücken'], [681, 367, 'Rouen'],
        [668, 364, 'Le Havre'], [667, 375, 'Normandie'], [699, 378, 'Paris', 'large'], [722, 375, 'Reims'],
        [748, 382, 'Nancy'], [723, 391, 'Troyes'], [649, 397, 'Rennes', 'large'], [668, 402, 'Le Mans'],
        [627, 396, 'Quimper'], [690, 405, 'Orléans'], [654, 410, 'Pays de la Loire'], [757, 407, 'Épinal'],
        [773, 407, 'Basel'], [777, 394, 'Freiburg'], [776, 383, 'Karlsruhe'],
        [629, 366, 'Guernsey', 'sea'], [633, 375, 'Jersey', 'sea']
    ];
    const g = document.getElementById('cities');
    cities.forEach(([x, y, name, cls]) => add(g, 'text', { x, y, 'text-anchor': 'middle', class: cls || '' }, name));

    const roads = document.getElementById('roads');
    for (let i = 0; i < 230; i++) {
        const a = cities[Math.floor(rnd() * cities.length)];
        const b = [a[0] + (rnd() - 0.5) * 36, a[1] + (rnd() - 0.5) * 36];
        add(roads, 'path', { d: `M${a[0]} ${a[1]}Q${(a[0] + b[0]) / 2 + 3} ${(a[1] + b[1]) / 2 - 3} ${b[0]} ${b[1]}` });
    }
}

const services = ['Actual Radio', 'BBC Essex', 'Capital UK', 'Grt Hits Essex', 'Heart Essex',
    'HITS RADIO UK', 'Radio Essex', 'Shine 879', 'Smooth Country', 'Smooth Essex'];
document.getElementById('services').innerHTML = services.map(s =>
    `<li><svg viewBox="0 0 6 8"><path d="M3 7V1l2 2v1" /><ellipse cx="2" cy="7" rx="1" ry=".5" /></svg>${s}</li>`).join('');

drawSpectrum();
drawCir();
drawTii();
drawIq();
drawMap();
```
